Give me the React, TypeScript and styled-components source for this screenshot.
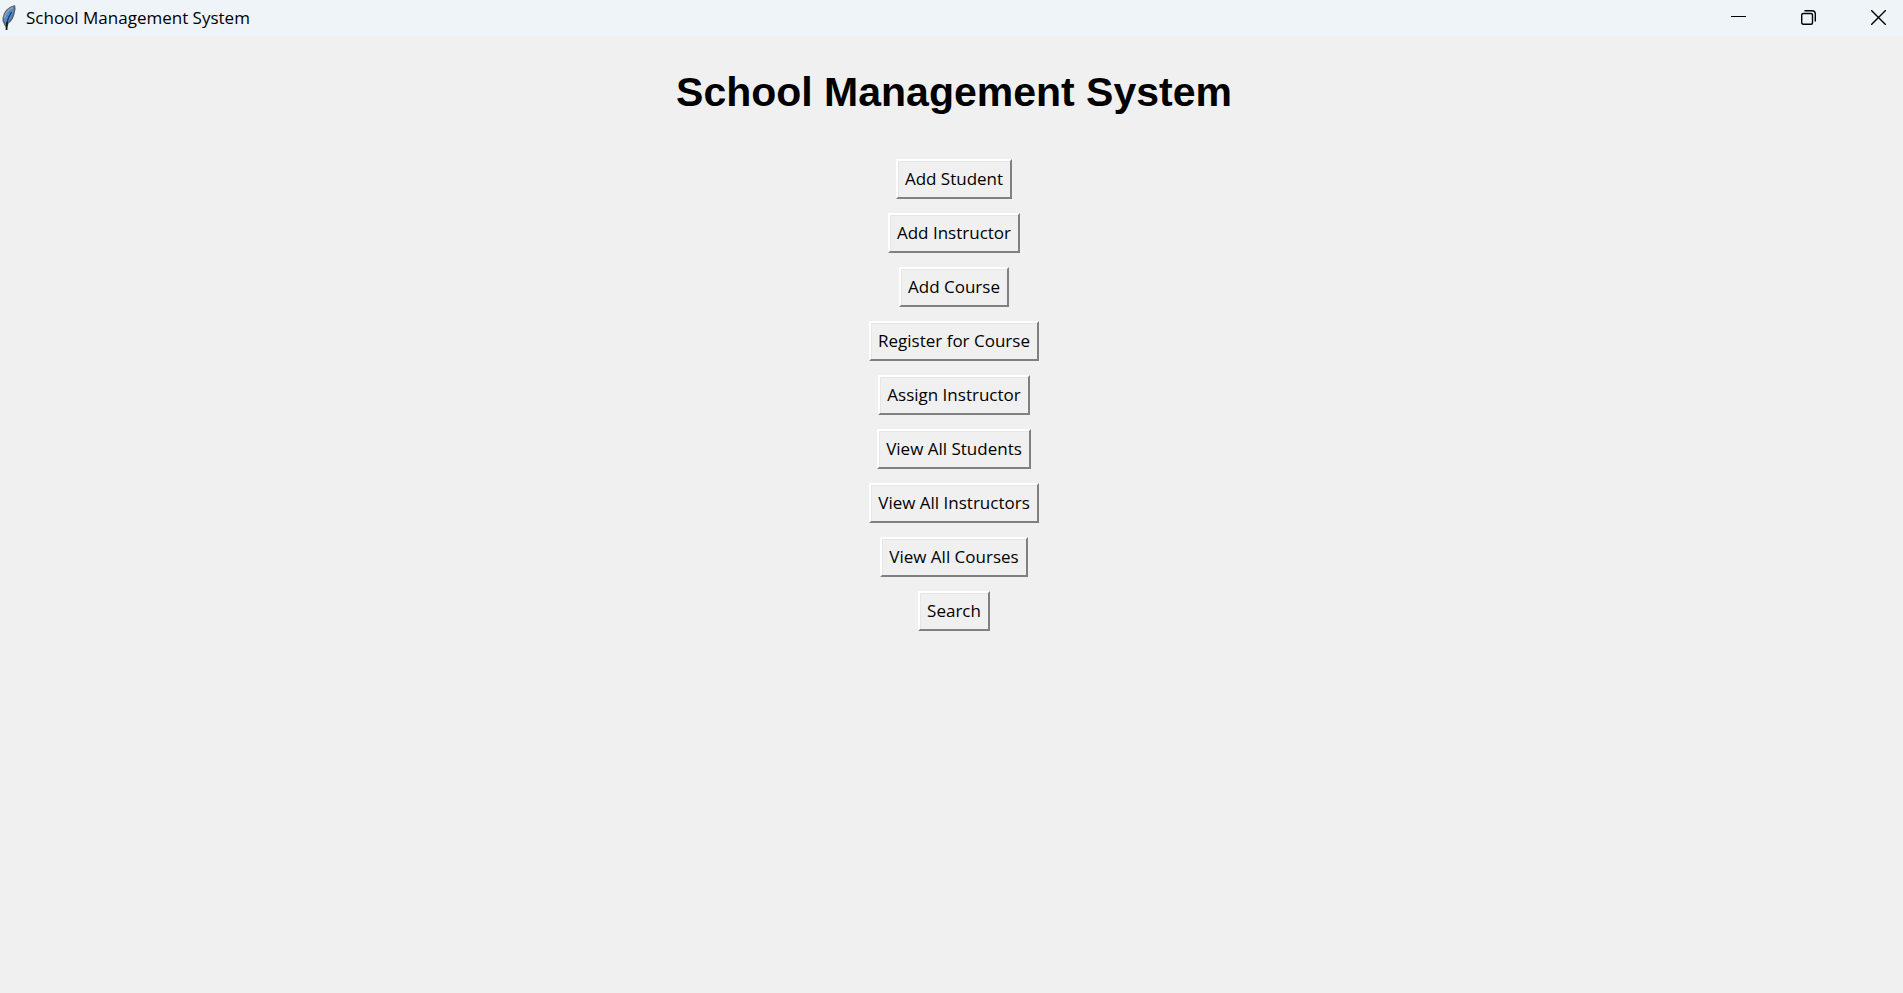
import React from "react";
import styled, { createGlobalStyle } from "styled-components";

const GlobalStyle = createGlobalStyle`
  *, *::before, *::after { box-sizing: border-box; }
  body { margin: 0; background: #f0f0f0; }
`;

const Window = styled.div`
  min-height: 100vh;
  display: flex;
  flex-direction: column;
  background: #f0f0f0;
  color: #000;
  font-family: "Open Sans", "Segoe UI", sans-serif;
`;

const TitleBar = styled.header`
  height: 36px;
  display: flex;
  align-items: flex-start;
  justify-content: space-between;
  background: #eef4f8;
`;

const Caption = styled.div`
  display: flex;
  align-items: center;
  gap: 8px;
  font-size: 17px;
  line-height: 36px;
`;

const Controls = styled.div`
  display: flex;
  gap: 20px;
`;

const ControlButton = styled.button`
  width: 50px;
  height: 34px;
  padding: 0;
  border: 0;
  background: transparent;
  color: #000;
  display: flex;
  align-items: center;
  justify-content: center;
`;

const Content = styled.main`
  display: flex;
  flex-direction: column;
  align-items: center;
  padding: 29px 0 30px 5px;
`;

const Heading = styled.h1`
  margin: 0 0 40px;
  font-family: "Liberation Sans", Arial, sans-serif;
  font-size: 41px;
  line-height: 54px;
  font-weight: 700;
`;

const Menu = styled.nav`
  display: flex;
  flex-direction: column;
  align-items: center;
  gap: 14px;
`;

const MenuButton = styled.button`
  height: 40px;
  padding: 0 7px;
  border: 2px solid;
  border-color: #fff #808080 #808080 #fff;
  background: #f0f0f0;
  box-shadow: inset 1px 1px #e6e6e6;
  color: #000;
  font: 17px/24px "Open Sans", "Segoe UI", sans-serif;
  white-space: nowrap;
`;

const actions = [
  "Add Student",
  "Add Instructor",
  "Add Course",
  "Register for Course",
  "Assign Instructor",
  "View All Students",
  "View All Instructors",
  "View All Courses",
  "Search",
];

const FeatherIcon = () => (
  <svg width="18" height="30" viewBox="0 1 18 30" aria-hidden="true">
    <path d="M14.500 4C9 5 4 10 3.200 16c-.3 2 0 4 1.500 6L6.500 25l1.500-4C12 18 13.500 14 14.200 10c.8-2 .8-4 .3-6Z" fill="#4a8bd4" stroke="#59626d" strokeWidth="1.500" />
    <path d="M13 5.500C9 7 5.500 11 4.500 16" fill="none" stroke="#9a9ea3" strokeWidth="1.800" />
    <path d="M11.500 10C9 14 7.500 18 6.500 22" fill="none" stroke="#1b3350" strokeWidth="1.200" />
    <path d="M7 20L6.500 28" fill="none" stroke="#16191d" strokeWidth="1.800" />
  </svg>
);

export default function App() {
  return (
    <Window>
      <GlobalStyle />
      <TitleBar>
        <Caption>
          <FeatherIcon />
          <span>School Management System</span>
        </Caption>
        <Controls>
          <ControlButton type="button" aria-label="Minimize">
            <svg width="15" height="15" viewBox="0 0 15 15"><path d="M0 6.500h15" stroke="#000" /></svg>
          </ControlButton>
          <ControlButton type="button" aria-label="Restore">
            <svg width="15" height="15" viewBox="0 0 15 15" fill="none" stroke="#000" strokeWidth="1.400">
              <rect x=".7" y="3.500" width="10.800" height="10.800" rx="1.500" />
              <path d="M3.500.7h7.500a3.300 3.300 0 0 1 3.300 3.300v7.500" />
            </svg>
          </ControlButton>
          <ControlButton type="button" aria-label="Close">
            <svg width="15" height="15" viewBox="0 0 15 15"><path d="M0 0l15 15M15 0L0 15" stroke="#000" strokeWidth="1.400" /></svg>
          </ControlButton>
        </Controls>
      </TitleBar>
      <Content>
        <Heading>School Management System</Heading>
        <Menu aria-label="School actions">
          {actions.map((label) => (
            <MenuButton key={label} type="button">{label}</MenuButton>
          ))}
        </Menu>
      </Content>
    </Window>
  );
}
